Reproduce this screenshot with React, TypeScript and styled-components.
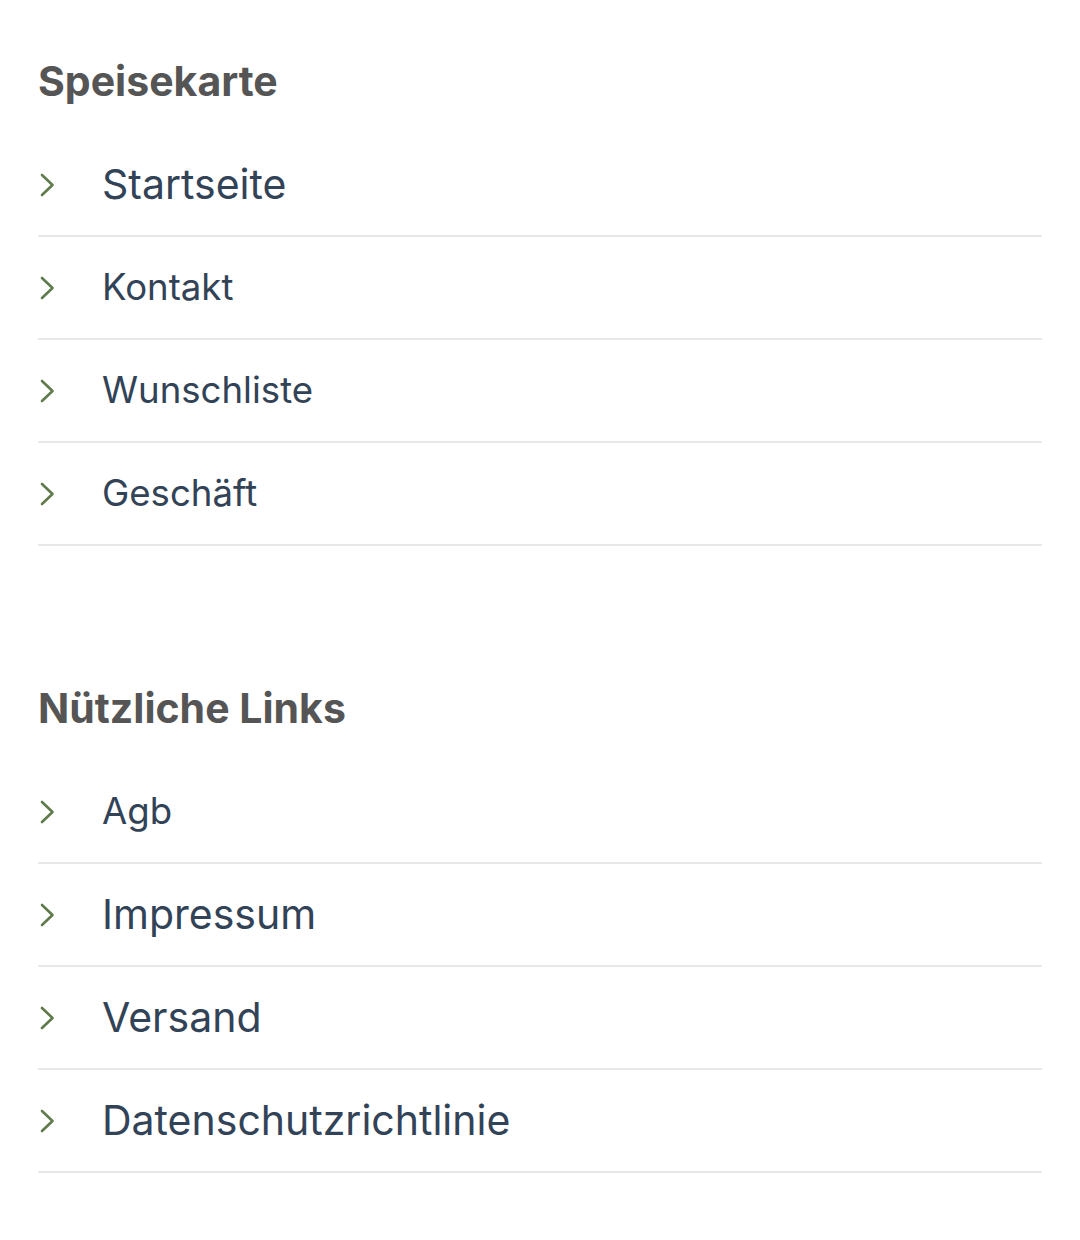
import React from "react";
import styled, { createGlobalStyle } from "styled-components";

const Global = createGlobalStyle`
  html, body { margin: 0; padding: 0; background: #ffffff; }
  body { font-family: Inter, "Noto Sans", sans-serif; -webkit-font-smoothing: antialiased; }
`;

const Page = styled.div`
  padding: 58px 38px 40px 38px;
  display: flex;
  flex-direction: column;
  gap: 139px;
`;

const Section = styled.section`
  display: flex;
  flex-direction: column;
`;

const Heading = styled.h2`
  margin: 0 0 30px 0;
  font-size: 41px;
  line-height: 46px;
  font-weight: 700;
  color: #555555;
`;

const List = styled.ul`
  list-style: none;
  margin: 0;
  padding: 0;
`;

const Item = styled.li`
  height: 101px;
  border-bottom: 2px solid #e8e8e8;
  display: flex;
  align-items: center;
`;

const Chevron = styled.svg`
  width: 16px;
  height: 24px;
  flex: 0 0 auto;
  margin-left: 1px;
  margin-right: 47px;
`;

const Label = styled.a<{ $size: number }>`
  font-size: ${(p) => p.$size}px;
  line-height: 1.2;
  color: #324357;
  text-decoration: none;
  font-weight: 400;
`;

const Arrow = () => (
  <Chevron viewBox="0 0 16 24">
    <polyline
      points="3,2 13.5,12 3,22"
      fill="none"
      stroke="#5f7a4b"
      strokeWidth="2.6"
      strokeLinecap="round"
      strokeLinejoin="round"
    />
  </Chevron>
);

type Link = { label: string; size: number };

const menu: Link[] = [
  { label: "Startseite", size: 41 },
  { label: "Kontakt", size: 36.6 },
  { label: "Wunschliste", size: 36.6 },
  { label: "Geschäft", size: 36.6 },
];

const useful: Link[] = [
  { label: "Agb", size: 36.6 },
  { label: "Impressum", size: 41 },
  { label: "Versand", size: 41 },
  { label: "Datenschutzrichtlinie", size: 41 },
];

const LinkList = ({ items }: { items: Link[] }) => (
  <List>
    {items.map((it) => (
      <Item key={it.label}>
        <Arrow />
        <Label href="#" $size={it.size}>
          {it.label}
        </Label>
      </Item>
    ))}
  </List>
);

export default function App() {
  return (
    <>
      <Global />
      <Page>
        <Section>
          <Heading>Speisekarte</Heading>
          <LinkList items={menu} />
        </Section>
        <Section>
          <Heading>Nützliche Links</Heading>
          <LinkList items={useful} />
        </Section>
      </Page>
    </>
  );
}
